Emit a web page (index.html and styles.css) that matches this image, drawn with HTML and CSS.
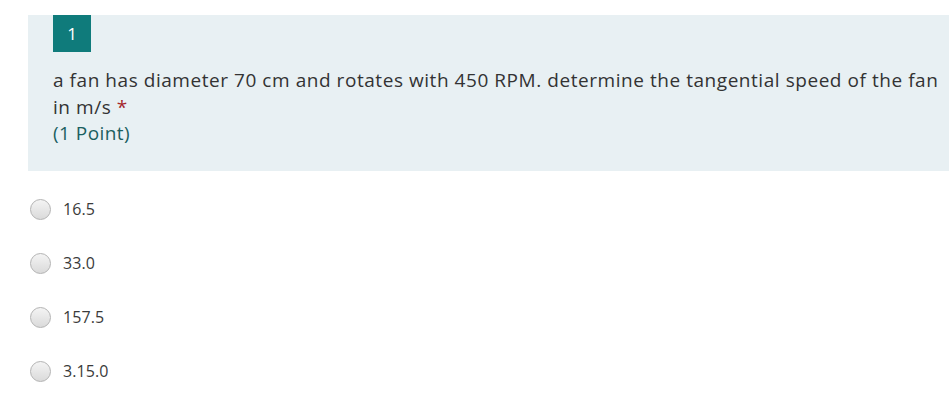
FILE: index.html
```
<!DOCTYPE html>
<html>
<head>
<meta charset="utf-8">
<link rel="stylesheet" href="styles.css">
</head>
<body>
<div class="question">
  <div class="panel">
    <div class="badge">1</div>
    <div class="title">a fan has diameter 70 cm and rotates with 450 RPM. determine the tangential speed of the fan in m/s <span class="req">*</span></div>
    <div class="points">(1 Point)</div>
  </div>
  <div class="options">
    <label class="option"><span class="radio"></span><span class="label">16.5</span></label>
    <label class="option"><span class="radio"></span><span class="label">33.0</span></label>
    <label class="option"><span class="radio"></span><span class="label">157.5</span></label>
    <label class="option"><span class="radio"></span><span class="label">3.15.0</span></label>
  </div>
</div>
</body>
</html>
```
FILE: styles.css
```
html, body {
  margin: 0;
  padding: 0;
  background: #ffffff;
}
body {
  font-family: "Open Sans", "Noto Sans", sans-serif;
  color: #333333;
}
.question {
  padding-top: 15px;
}
.panel {
  margin-left: 28px;
  background: #e8f0f3;
  padding: 0 0 24px 25px;
}
.badge {
  display: inline-block;
  width: 38px;
  height: 37px;
  line-height: 37px;
  text-align: center;
  background: #0f7b7b;
  color: #ffffff;
  font-size: 17px;
}
.title {
  margin-top: 15px;
  font-size: 19px;
  line-height: 26.5px;
  letter-spacing: 0.55px;
  color: #333333;
}
.req {
  color: #a4262c;
}
.points {
  font-size: 19px;
  line-height: 27px;
  letter-spacing: 0.45px;
  color: #1a5f5f;
}
.options {
  padding: 11px 0 0 30px;
  display: flex;
  flex-direction: column;
}
.option {
  display: flex;
  align-items: center;
  height: 54px;
}
.radio {
  width: 21px;
  height: 21px;
  border-radius: 50%;
  border: 1px solid #b3b3b3;
  background: linear-gradient(#f4f4f4, #dadada);
  box-sizing: border-box;
}
.label {
  margin-left: 12px;
  font-size: 16px;
  letter-spacing: 0.1px;
  color: #3b3b3b;
}
```
